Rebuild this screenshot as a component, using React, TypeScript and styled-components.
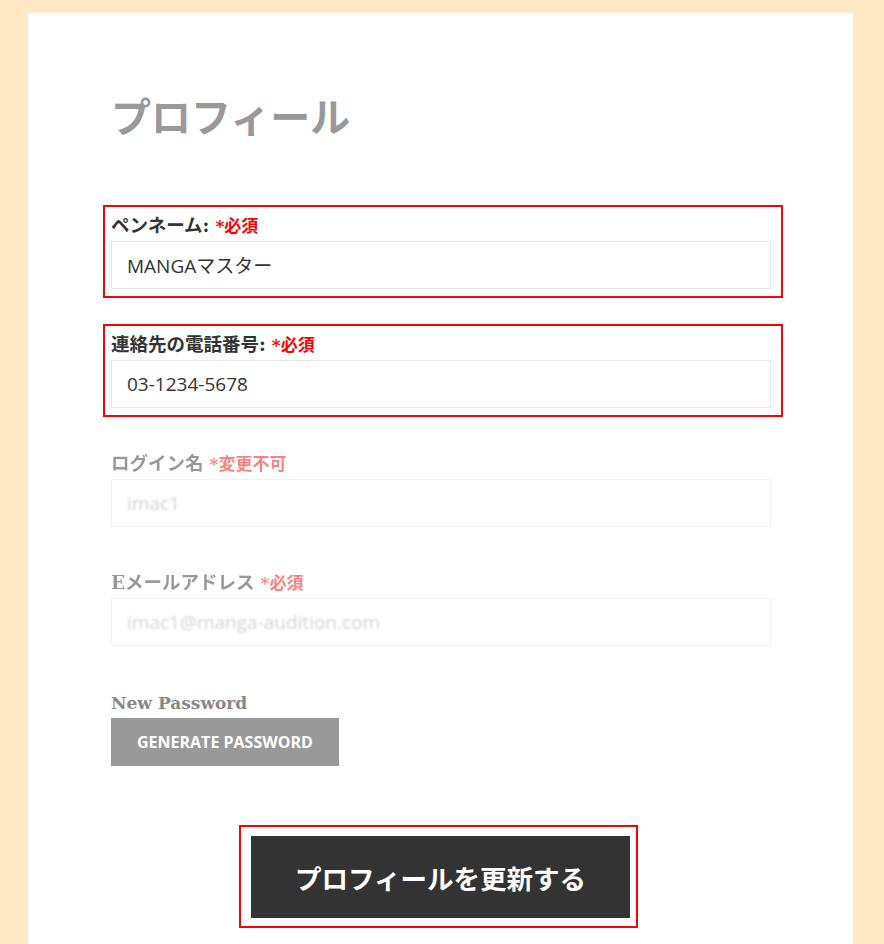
import React, { FC } from 'react';
import styled, { createGlobalStyle } from 'styled-components';

const GlobalStyle = createGlobalStyle`
  html, body {
    margin: 0;
    padding: 0;
    background: #ffe8c4;
  }
  body {
    font-family: "Noto Sans", "Noto Sans CJK JP", sans-serif;
  }
`;

const Page = styled.div`
  min-height: 944px;
  padding: 13px 31px 0 28px;
  box-sizing: border-box;
`;

const Card = styled.div`
  background: #fff;
  min-height: 931px;
  padding: 77px 70px 0 75px;
  box-sizing: border-box;
`;

const Title = styled.h1`
  margin: 0 0 59px 8px;
  font-family: "DejaVu Serif", "Noto Sans CJK JP", serif;
  font-size: 40px;
  line-height: 56px;
  font-weight: 700;
  color: #999;
`;

const Field = styled.div<{ $highlight?: boolean; $disabled?: boolean }>`
  border: 2px solid ${p => (p.$highlight ? '#ff0000' : 'transparent')};
  padding: 6px 10px 7px 6px;
  margin-bottom: 26px;
  opacity: ${p => (p.$disabled ? 0.5 : 1)};
`;

const Label = styled.label`
  display: block;
  height: 26px;
  margin-bottom: 2px;
  font-family: "DejaVu Serif", "Noto Sans CJK JP", serif;
  font-size: 18.5px;
  line-height: 26px;
  font-weight: 700;
  color: #333;
`;

const Required = styled.span`
  color: #f00;
  font-size: 17px;
  margin-left: 6px;
`;

const Input = styled.div`
  height: 48px;
  box-sizing: border-box;
  border: 1px solid #e6e6e6;
  padding: 0 15px;
  display: flex;
  align-items: center;
  font-family: "Open Sans", "Noto Sans CJK JP", sans-serif;
  font-size: 19px;
  color: #333;
`;

const Blurred = styled.span`
  color: #aaa;
  filter: blur(1.3px);
`;

const PasswordBlock = styled.div`
  padding: 0 0 0 8px;
  margin-top: 37px;
`;

const PasswordLabel = styled.div`
  font-family: "DejaVu Serif", serif;
  font-size: 17px;
  line-height: 22px;
  font-weight: 700;
  color: #888;
  margin-bottom: 4px;
`;

const GenerateButton = styled.button`
  height: 48px;
  padding: 0 26px;
  border: none;
  background: #999;
  color: #fff;
  font-family: "Open Sans", sans-serif;
  font-size: 16px;
  font-weight: 700;
  text-transform: uppercase;
`;

const SubmitRow = styled.div`
  display: flex;
  justify-content: center;
  margin-top: 59px;
  padding-right: 9px;
`;

const SubmitFrame = styled.div`
  border: 2px solid #f00;
  padding: 9px 6px 8px 10px;
`;

const SubmitButton = styled.button`
  width: 379px;
  height: 82px;
  border: none;
  background: #333;
  color: #fff;
  font-family: "Noto Sans CJK JP", sans-serif;
  font-size: 26.5px;
  font-weight: 700;
`;

const App: FC = () => {
  return (
    <>
      <GlobalStyle />
      <Page>
        <Card>
          <Title>プロフィール</Title>

          <Field $highlight>
            <Label>
              ペンネーム:<Required>*必須</Required>
            </Label>
            <Input>MANGAマスター</Input>
          </Field>

          <Field $highlight>
            <Label>
              連絡先の電話番号:<Required>*必須</Required>
            </Label>
            <Input>03-1234-5678</Input>
          </Field>

          <Field $disabled>
            <Label>
              ログイン名<Required>*変更不可</Required>
            </Label>
            <Input>
              <Blurred>imac1</Blurred>
            </Input>
          </Field>

          <Field $disabled>
            <Label>
              Eメールアドレス<Required>*必須</Required>
            </Label>
            <Input>
              <Blurred>imac1@manga-audition.com</Blurred>
            </Input>
          </Field>

          <PasswordBlock>
            <PasswordLabel>New Password</PasswordLabel>
            <GenerateButton>Generate Password</GenerateButton>
          </PasswordBlock>

          <SubmitRow>
            <SubmitFrame>
              <SubmitButton>プロフィールを更新する</SubmitButton>
            </SubmitFrame>
          </SubmitRow>
        </Card>
      </Page>
    </>
  );
};

export default App;
